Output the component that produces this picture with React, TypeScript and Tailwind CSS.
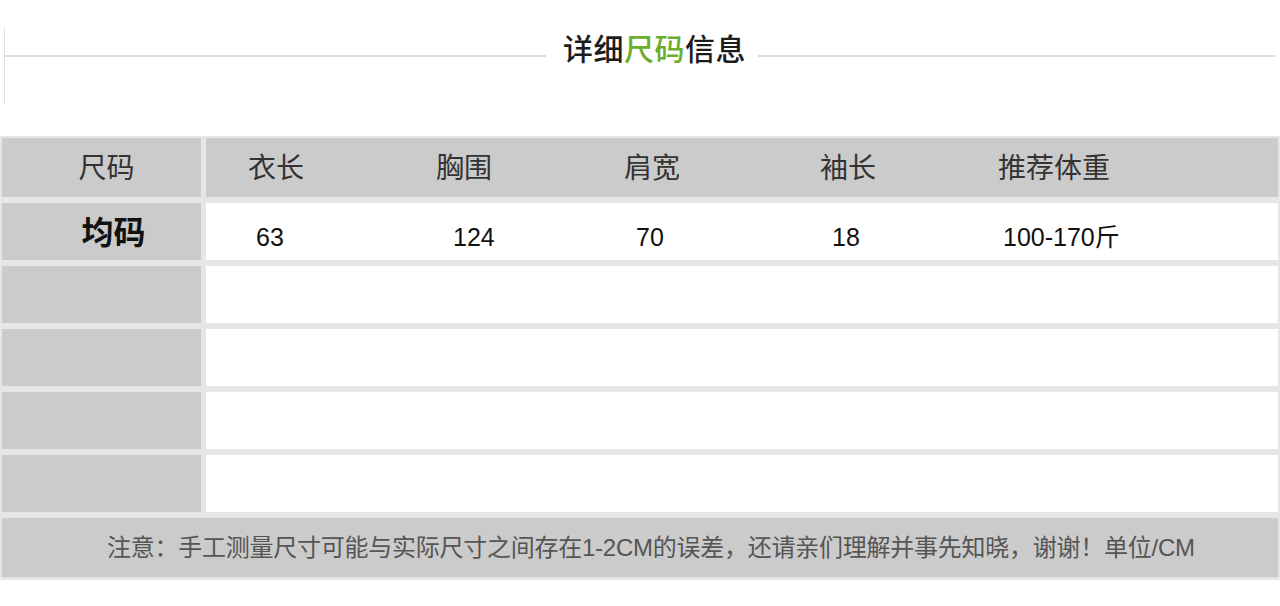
const FONT = "font-['Liberation_Sans','Noto_Sans_CJK_SC',sans-serif]";

/** 表头各列: 文字起点相对于格子左边 */
const HEAD = [
  { label: "衣长", w: "w-[230px]", pl: "pl-[42px]" },
  { label: "胸围", w: "w-[188px]", pl: "pl-0" },
  { label: "肩宽", w: "w-[196px]", pl: "pl-0" },
  { label: "袖长", w: "w-[178px]", pl: "pl-0" },
  { label: "推荐体重", w: "flex-1", pl: "pl-0" },
];

const VALUES = [
  { v: "63", w: "w-[230px]", pl: "pl-[50px]" },
  { v: "124", w: "w-[188px]", pl: "pl-[17px]" },
  { v: "70", w: "w-[196px]", pl: "pl-[12px]" },
  { v: "18", w: "w-[178px]", pl: "pl-[12px]" },
  { v: "100-170斤", w: "flex-1", pl: "pl-[5px]" },
];

function EmptyRow() {
  return (
    <div className="flex h-[57px] gap-[5px]">
      <div className="w-[199px] bg-[#cbcbcb]" />
      <div className="flex-1 bg-white" />
    </div>
  );
}

export default function App() {
  return (
    <div className={`w-[1280px] h-[606px] bg-white overflow-hidden ${FONT}`}>
      {/* 标题 */}
      <div className="h-[136px] pt-[28px] pl-[4px]">
        <div className="h-[76px] border-l border-[#e2e2e2]">
          <div className="h-[56px] flex items-center">
            <div className="w-[541px] h-[2px] bg-[#dcdcdc]" />
            <div className="ml-[17px] mb-[12px] text-[30px] leading-none font-medium text-[#1c1c1c] tracking-[0.5px]">
              详细<span className="text-[#6cae2a]">尺码</span>信息
            </div>
            <div className="ml-[12px] mr-[5px] flex-1 h-[2px] bg-[#dcdcdc]" />
          </div>
        </div>
      </div>

      {/* 尺码表 */}
      <div className="bg-[#e6e6e6] pt-[2px] pl-[2px] pr-[2px] pb-[3px] flex flex-col gap-[6px]">
        <div className="flex h-[59px] gap-[5px]">
          <div className="w-[199px] bg-[#cbcbcb] flex items-center justify-center pl-[10px] pt-[3px] text-[28px] text-[#333]">
            尺码
          </div>
          <div className="flex-1 bg-[#cbcbcb] flex items-center pt-[3px] text-[28px] text-[#333]">
            {HEAD.map((h) => (
              <div key={h.label} className={`${h.w} ${h.pl} shrink-0`}>
                {h.label}
              </div>
            ))}
          </div>
        </div>

        <div className="flex h-[57px] gap-[5px]">
          <div className="w-[199px] bg-[#cbcbcb] flex items-center justify-center pl-[24px] pt-[2px] text-[32px] font-bold text-[#111]">
            均码
          </div>
          <div className="flex-1 bg-white flex items-center pt-[13px] text-[25px] text-[#111]">
            {VALUES.map((c) => (
              <div key={c.v} className={`${c.w} ${c.pl} shrink-0`}>
                {c.v}
              </div>
            ))}
          </div>
        </div>

        <EmptyRow />
        <EmptyRow />
        <EmptyRow />
        <EmptyRow />

        <div className="h-[59px] bg-[#cbcbcb] flex items-center pl-[105px] text-[24px] tracking-[-0.25px] text-[#555]">
          注意：手工测量尺寸可能与实际尺寸之间存在1-2CM的误差，还请亲们理解并事先知晓，谢谢！单位/CM
        </div>
      </div>
    </div>
  );
}
